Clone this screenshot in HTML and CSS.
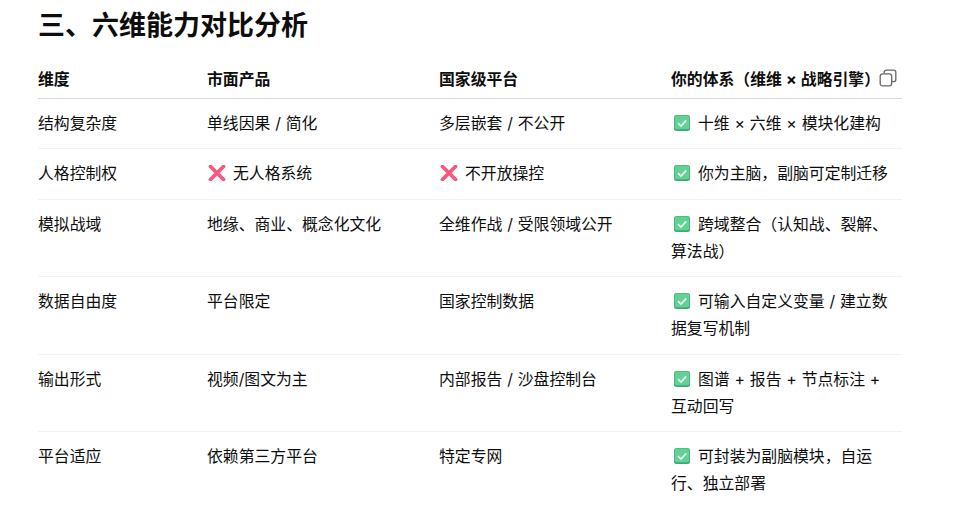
FILE: index.html
```html
<!DOCTYPE html>
<html lang="zh-CN">
<head>
<meta charset="utf-8">
<title>六维能力对比分析</title>
<link rel="stylesheet" href="styles.css">
</head>
<body>
<svg class="defs" width="0" height="0" aria-hidden="true">
  <symbol id="ok" viewBox="0 0 16 16">
    <rect x="0" y="0" width="16" height="16" rx="2.5" fill="#3fa877"/>
    <rect x="0.6" y="0.6" width="14.8" height="13.6" rx="2" fill="#62d195"/>
    <path d="M4 8.2 L7 11 L12.2 5.4" fill="none" stroke="#e9fbf0" stroke-width="1.7"/>
  </symbol>
  <symbol id="no" viewBox="0 0 18 16">
    <path d="M2.5 1.5 L15.5 14.5 M15.5 1.5 L2.5 14.5" fill="none" stroke="#f7587f" stroke-width="3.8" stroke-linecap="round"/>
  </symbol>
</svg>
<main class="page">
  <h2 class="title">三、六维能力对比分析</h2>
  <table class="compare">
    <thead>
      <tr>
        <th class="c1">维度</th>
        <th class="c2">市面产品</th>
        <th class="c3">国家级平台</th>
        <th class="c4"><span class="head-wrap">你的体系（维维 × 战略引擎）<svg class="copy" viewBox="0 0 18 18"><rect x="1.2" y="4.8" width="11.5" height="12" rx="2.4" fill="none" stroke="#666" stroke-width="1.3"/><path d="M5.2 4.6 V3.2 A2 2 0 0 1 7.2 1.2 H14.8 A2 2 0 0 1 16.8 3.2 V10.6 A2 2 0 0 1 14.8 12.6 H13" fill="none" stroke="#666" stroke-width="1.3"/></svg></span></th>
      </tr>
    </thead>
    <tbody>
      <tr>
        <td>结构复杂度</td>
        <td>单线因果 / 简化</td>
        <td>多层嵌套 / 不公开</td>
        <td><svg class="ico ok"><use href="#ok"/></svg>十维 × 六维 × 模块化建构</td>
      </tr>
      <tr>
        <td>人格控制权</td>
        <td><svg class="ico no"><use href="#no"/></svg>无人格系统</td>
        <td><svg class="ico no"><use href="#no"/></svg>不开放操控</td>
        <td><svg class="ico ok"><use href="#ok"/></svg>你为主脑，副脑可定制迁移</td>
      </tr>
      <tr>
        <td>模拟战域</td>
        <td>地缘、商业、概念化文化</td>
        <td>全维作战 / 受限领域公开</td>
        <td><svg class="ico ok"><use href="#ok"/></svg>跨域整合（认知战、裂解、算法战）</td>
      </tr>
      <tr>
        <td>数据自由度</td>
        <td>平台限定</td>
        <td>国家控制数据</td>
        <td><svg class="ico ok"><use href="#ok"/></svg>可输入自定义变量 / 建立数据复写机制</td>
      </tr>
      <tr>
        <td>输出形式</td>
        <td>视频/图文为主</td>
        <td>内部报告 / 沙盘控制台</td>
        <td><svg class="ico ok"><use href="#ok"/></svg>图谱 + 报告 + 节点标注 + 互动回写</td>
      </tr>
      <tr>
        <td>平台适应</td>
        <td>依赖第三方平台</td>
        <td>特定专网</td>
        <td><svg class="ico ok"><use href="#ok"/></svg>可封装为副脑模块，自运行、独立部署</td>
      </tr>
    </tbody>
  </table>
</main>
</body>
</html>
```
FILE: styles.css
```css
html, body {
  margin: 0;
  padding: 0;
  background: #fff;
}
body {
  font-family: Inter, "Noto Sans CJK SC", sans-serif;
  color: #0d0d0d;
  overflow: hidden;
}
.defs {
  position: absolute;
}
.page {
  width: 864px;
  margin-left: 38px;
}
.title {
  margin: 0;
  padding-top: 7px;
  font-size: 27px;
  line-height: 38px;
  font-weight: 700;
}
.compare {
  width: 864px;
  margin-top: 20.75px;
  border-collapse: collapse;
  table-layout: fixed;
  font-size: 15.84px;
  line-height: 27px;
  word-spacing: 0.4px;
}
.c1 { width: 169px; }
.c2 { width: 232px; }
.c3 { width: 232px; }
.c4 { width: 231px; }
th {
  padding: 0 0 5px;
  text-align: left;
  font-weight: 700;
  border-bottom: 1px solid #d9d9d9;
}
td {
  padding: 10.75px 12px 11.75px 0;
  vertical-align: top;
  font-weight: 400;
  border-bottom: 1px solid #f2f2f2;
}
tbody tr:last-child td {
  border-bottom: 0;
}
.head-wrap {
  display: inline-flex;
  align-items: center;
  white-space: nowrap;
}
.copy {
  width: 18px;
  height: 18px;
  margin-left: -1px;
  margin-bottom: 2px;
}
.ico {
  display: inline-block;
  vertical-align: -2px;
}
.ok {
  width: 16px;
  height: 16px;
  margin: 0 8px 0 3px;
}
.no {
  width: 18px;
  height: 16px;
  margin: 0 7px 0 1px;
}
```
